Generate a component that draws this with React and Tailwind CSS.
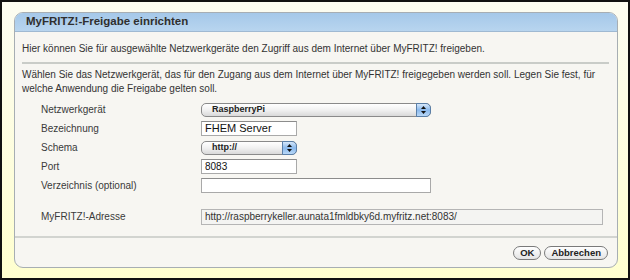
import React from "react";

const FONT = { fontFamily: '"Liberation Sans", Arial, sans-serif' };

function AquaSelect({ value, className }) {
  return (
    <div
      className={`relative flex h-[14px] items-center rounded-[5px] border border-[#8a8a8a] bg-gradient-to-b from-[#ffffff] via-[#f1f1f1] to-[#d9d9d9] ${className}`}
    >
      <span className="pl-[10px] text-[9px] font-bold leading-none text-[#222]">{value}</span>
      <div className="absolute right-[-1px] top-[-1px] flex h-[14px] w-[15px] flex-col items-center justify-center gap-[2px] rounded-r-[5px] border border-[#5a7fa8] bg-gradient-to-b from-[#d7e8fa] via-[#89b8ec] to-[#b9d8f7]">
        <svg width="5" height="3" viewBox="0 0 5 3">
          <path d="M0 3 L2.5 0 L5 3 Z" fill="#111" />
        </svg>
        <svg width="5" height="3" viewBox="0 0 5 3">
          <path d="M0 0 L2.5 3 L5 0 Z" fill="#111" />
        </svg>
      </div>
    </div>
  );
}

function TextInput({ value, className }) {
  return (
    <div
      className={`flex h-[15px] items-center border border-[#a9a9a9] border-t-[#8c8c8c] bg-white pl-[3px] leading-none text-[#111] ${className}`}
    >
      {value}
    </div>
  );
}

function Row({ label, children }) {
  return (
    <div className="flex h-[19px] items-center">
      <div className="w-[179px] pl-[19px] text-[10px] text-[#3a3a3a]">{label}</div>
      {children}
    </div>
  );
}

function PillButton({ children }) {
  return (
    <button className="flex h-[14px] items-center rounded-full border border-[#7a7a7a] bg-gradient-to-b from-[#ffffff] to-[#e4e4e4] px-[6px] text-[9.5px] font-bold leading-none text-[#222]">
      {children}
    </button>
  );
}

export default function App() {
  return (
    <div
      style={FONT}
      className="h-[280px] w-[630px] border-2 border-[#111] bg-gradient-to-b from-[#fcfcf1] to-[#ffffcf] pl-[12px] pt-[10px]"
    >
      <div className="flex h-[256px] w-[604px] flex-col overflow-hidden rounded-[9px] border border-[#a7aeb3] bg-[#f7f6f2]">
        <div className="flex h-[19px] shrink-0 items-center border-b border-[#9fb9d2] bg-gradient-to-b from-[#a5c8e9] to-[#b8d5ef] pl-[11px] text-[11.5px] font-bold text-[#2f2f2f]">
          MyFRITZ!-Freigabe einrichten
        </div>

        <div className="h-[204px] shrink-0 px-[7px]">
          <p className="mt-[10px] text-[10px] leading-[14px] text-[#333]">
            Hier können Sie für ausgewählte Netzwerkgeräte den Zugriff aus dem Internet über MyFRITZ! freigeben.
          </p>
          <div className="mt-[6px] h-[2px] w-[587px] bg-[#c9ccc8]" />
          <p className="mt-[4px] whitespace-nowrap text-[10px] leading-[14px] text-[#333]">
            Wählen Sie das Netzwerkgerät, das für den Zugang aus dem Internet über MyFRITZ! freigegeben werden soll. Legen Sie fest, für
            <br />
            welche Anwendung die Freigabe gelten soll.
          </p>

          <div className="mt-[4px] flex flex-col">
            <Row label="Netzwerkgerät">
              <AquaSelect value="RaspberryPi" className="w-[230px]" />
            </Row>
            <Row label="Bezeichnung">
              <TextInput value="FHEM Server" className="w-[96px] text-[11px]" />
            </Row>
            <Row label="Schema">
              <AquaSelect value="http://" className="w-[96px]" />
            </Row>
            <Row label="Port">
              <TextInput value="8083" className="w-[96px] text-[10px]" />
            </Row>
            <Row label="Verzeichnis (optional)">
              <TextInput value="" className="w-[230px]" />
            </Row>
            <div className="mt-[12px]">
              <Row label="MyFRITZ!-Adresse">
                <div className="flex h-[16px] w-[402px] items-center border border-[#b5b5b5] bg-[#f4f4f2] pl-[3px] text-[10px] leading-none text-[#333]">
                  http://raspberrykeller.aunata1fmldbky6d.myfritz.net:8083/
                </div>
              </Row>
            </div>
          </div>
        </div>

        <div className="flex flex-1 items-center justify-end gap-[3px] border-t-2 border-[#d2d4d0] pr-[9px]">
          <PillButton>OK</PillButton>
          <PillButton>Abbrechen</PillButton>
        </div>
      </div>
    </div>
  );
}
